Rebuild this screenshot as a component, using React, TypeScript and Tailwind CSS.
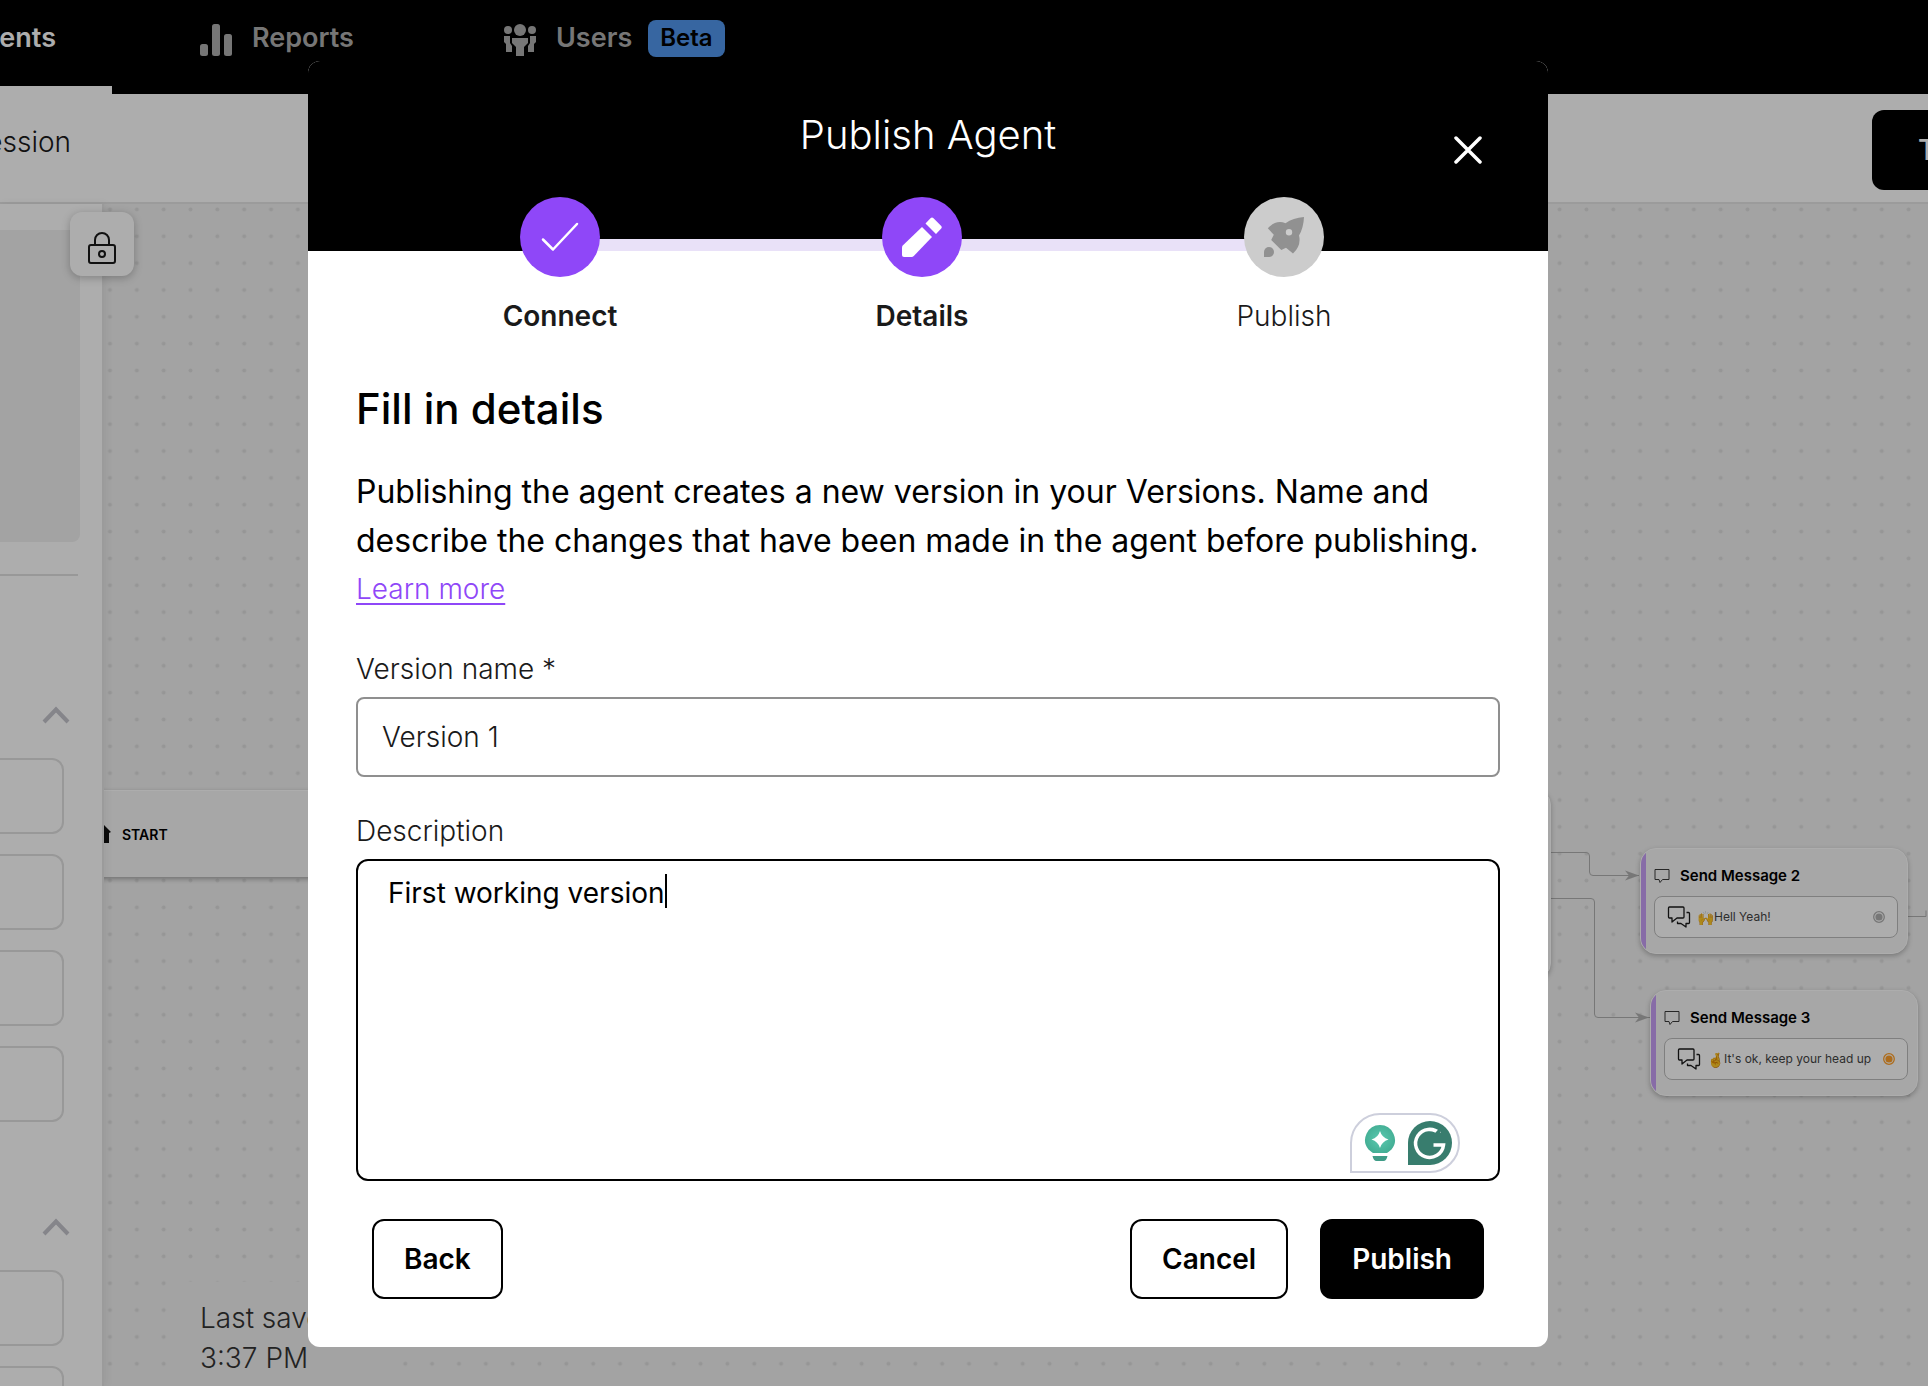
import { useState } from "react";
import type { ReactNode } from "react";

const steps = [
  { label: "Connect", done: true, icon: <CheckIcon /> },
  { label: "Details", done: true, icon: <PencilIcon /> },
  { label: "Publish", done: false, icon: <RocketIcon /> },
];

function BarsIcon() {
  return (
    <svg width="32" height="32" viewBox="0 0 32 32" fill="currentColor">
      <rect x="0" y="20" width="8" height="12" rx="2.5" />
      <rect x="12" y="0" width="8" height="32" rx="2.5" />
      <rect x="24" y="10" width="8" height="22" rx="2.5" />
    </svg>
  );
}

function PeopleIcon() {
  return (
    <svg width="32" height="32" viewBox="0 0 32 32" fill="currentColor">
      <circle cx="4" cy="6" r="4" />
      <circle cx="28" cy="6" r="4" />
      <circle cx="16" cy="6" r="6" />
      <path d="M8 14h16v5l-4 4v9h-8v-9l-4-4z" />
      <path d="M0 12h6v7l2 3v6H2v-8l-2-2z" />
      <path d="M32 12h-6v7l-2 3v6h6v-8l2-2z" />
    </svg>
  );
}

function LockIcon() {
  return (
    <svg width="30" height="34" viewBox="0 0 30 34" fill="none" stroke="#1a1a1a" strokeWidth="2">
      <rect x="2" y="14" width="26" height="18" rx="2" />
      <path d="M8 14V9a7 7 0 0 1 14 0v5" />
      <circle cx="15" cy="23" r="3" />
    </svg>
  );
}

function ChevronUp() {
  return (
    <svg width="28" height="18" viewBox="0 0 28 18" fill="none" stroke="#c4c4cc" strokeWidth="4">
      <path d="M2 16L14 3.500L26 16" />
    </svg>
  );
}

function CheckIcon() {
  return (
    <svg width="40" height="40" viewBox="0 0 40 40" fill="none" stroke="white" strokeWidth="2.500" strokeLinecap="round" strokeLinejoin="round">
      <path d="M3 22.500L13 32.500L37 7" />
    </svg>
  );
}

function PencilIcon() {
  return (
    <svg width="40" height="40" viewBox="0 0 40 40" fill="white">
      <path d="M20 10L30 20L11.800 39Q10.800 40 9.500 40H2Q0 40 0 38V30.500Q0 29.300 1 28.300Z" />
      <path d="M23.500 6.500L28.500 1.200Q30 -0.300 31.500 1.200L39 8.700Q40.500 10.200 39 11.700L34 17Z" />
    </svg>
  );
}

function RocketIcon() {
  return (
    <svg width="40" height="40" viewBox="0 0 40 40" fill="#919191">
      <path fillRule="evenodd" d="M40 0Q29 1 21.500 6.200Q12 2.500 3.800 11.300L9.800 17.800L7.200 23L17.300 33L22 30.800L29 36.500Q37.500 28.500 35 18.500Q39.500 11 40 0ZM25 12a3.200 3.200 0 1 0 0.010 6.400a3.200 3.200 0 1 0 0 -6.400Z" />
      <path d="M0 40V35A5 5 0 1 1 5 40Z" />
    </svg>
  );
}

function BubbleIcon() {
  return (
    <svg className="w-4 h-4" viewBox="0 0 16 16" fill="none" stroke="#3a3a3a" strokeWidth="1">
      <path d="M1 1.500h14v10H8.500L6 14.500L5 11.500H1z" />
    </svg>
  );
}

function BubblesIcon() {
  return (
    <svg className="w-6 h-6 shrink-0" viewBox="0 0 24 24" fill="none" stroke="#1a1a1a" strokeWidth="1.300" strokeLinejoin="round">
      <path d="M2.500 2h13.500q1 0 1 1v9q0 1 -1 1h-6l-5 4v-4h-2.500q-1 0 -1 -1v-9q0 -1 1 -1z" />
      <path d="M19.500 7.500h2q1 0 1 1v9q0 1 -1 1h-2.500v3.500l-5 -3.500h-3.500v-2" />
    </svg>
  );
}

function WritingHelper() {
  return (
    <div className="absolute right-10 bottom-2 flex h-[60px] w-[110px] items-center justify-between rounded-full rounded-bl-none border-2 border-[#cdcfdc] bg-white pl-3 pr-[6px]">
      <svg width="32" height="38" viewBox="0 0 32 38">
        <defs>
          <radialGradient id="bulb" cx="50%" cy="50%" r="55%">
            <stop offset="0" stopColor="#5cc9b0" />
            <stop offset="1" stopColor="#42ad93" />
          </radialGradient>
        </defs>
        <path d="M16 1a15 15 0 0 1 11.500 24.500q-3 2.500 -4.500 3.500h-14q-1.500 -1 -4.500 -3.500A15 15 0 0 1 16 1z" fill="url(#bulb)" />
        <path d="M8.500 32h15q-1 5 -4 5h-7q-3 0 -4 -5z" fill="#3f9c87" />
        <path d="M16 7q1.800 6.500 8.500 8.500q-6.700 2 -8.500 8.500q-1.800 -6.500 -8.500 -8.500q6.700 -2 8.500 -8.500z" fill="white" />
      </svg>
      <svg width="44" height="44" viewBox="0 0 44 44">
        <path d="M22 0a22 22 0 0 1 0 44H0V22A22 22 0 0 1 22 0z" fill="#387d6e" />
        <path d="M31.500 12.500A14 14 0 1 0 35.500 24H25.500" fill="none" stroke="white" strokeWidth="3.500" />
        <path d="M32 6.500v9h-8z" fill="#387d6e" />
      </svg>
    </div>
  );
}

function NavBar() {
  return (
    <nav className="flex h-[94px] shrink-0 bg-black text-[27px] font-semibold text-[#afafaf]">
      <a href="#agents" className="flex w-[112px] shrink-0 flex-col justify-between overflow-hidden text-white">
        <span className="flex h-[76px] items-center justify-end pr-14">Agents</span>
        <span className="h-2 bg-white" />
      </a>
      <a href="#reports" className="ml-[88px] flex h-[76px] w-[304px] shrink-0 items-center gap-5">
        <span className="pt-1"><BarsIcon /></span>
        Reports
      </a>
      <a href="#users" className="flex h-[76px] items-center gap-5">
        <span className="pt-1"><PeopleIcon /></span>
        Users
        <span className="-ml-1 flex h-[37px] items-center rounded-lg bg-[#5197ee] px-3 text-[24px] text-black">Beta</span>
      </a>
    </nav>
  );
}

function Toolbar() {
  return (
    <div className="flex h-[110px] shrink-0 items-start justify-between border-b-2 border-[#e5e5e5] bg-white">
      <div className="flex w-[71px] justify-end overflow-hidden pt-7 text-[28px] leading-10 font-light text-[#1a1a1a]">Session</div>
      <button className="mt-4 -mr-20 h-20 w-[136px] shrink-0 rounded-xl bg-black pl-[46px] text-left text-[28px] font-medium text-white">
        Test
      </button>
    </div>
  );
}

function BlockGroup({ count }: { count: number }) {
  return (
    <section>
      <div className="flex justify-end pr-8">
        <button aria-label="Collapse"><ChevronUp /></button>
      </div>
      <div className="mt-[34px] space-y-5 pr-[38px]">
        {Array.from({ length: count }, (_, i) => (
          <div key={i} className="h-[76px] rounded-r-xl border-2 border-l-0 border-[#e0e0e0]" />
        ))}
      </div>
    </section>
  );
}

function Sidebar() {
  return (
    <aside className="relative z-10 w-[104px] shrink-0 border-r-2 border-[#e5e5e5] bg-white shadow-[2px_0_8px_rgba(0,0,0,0.06)]">
      <div className="h-full overflow-hidden">
        <div className="mt-[26px] mr-[22px] h-[312px] rounded-br-lg bg-[#f0f0f0]" />
        <div className="mt-8 mr-6 h-[2px] bg-[#e0e0e0]" />
        <div className="mt-[130px] space-y-[96px]">
          <BlockGroup count={4} />
          <BlockGroup count={2} />
        </div>
      </div>
      <button aria-label="Lock" className="absolute top-2 left-[70px] flex h-16 w-16 items-center justify-center rounded-xl bg-white pt-2 shadow-[0_2px_8px_rgba(0,0,0,0.25)]">
        <LockIcon />
      </button>
    </aside>
  );
}

function MessageNode({ title, dot, emoji, className, children }: { title: string; dot: string; emoji: string; className: string; children: ReactNode }) {
  return (
    <div className={`absolute h-[106px] w-[268px] overflow-hidden rounded-2xl border border-white bg-[#f6f6f6] shadow-[0_2px_5px_rgba(0,0,0,0.25)] ${className}`}>
      <div className="flex h-full">
        <div className="w-[5px] shrink-0 bg-[#c8a0f7]" />
        <div className="flex-1 pt-[15px] pr-[9px] pl-2">
          <div className="flex h-6 items-center gap-[10px] text-[15px] font-semibold text-black">
            <BubbleIcon />
            {title}
          </div>
          <div className="mt-2 flex h-[42px] items-center rounded-lg border border-[#bcbcbc] bg-white px-3 text-[12px] text-[#444]">
            <BubblesIcon />
            <span className="ml-[6px] flex flex-1 items-center whitespace-nowrap">
              <span className="text-[14px]">{emoji}</span>
              {children}
            </span>
            <svg width="12" height="12" viewBox="0 0 12 12" stroke={dot} fill="none">
              <circle cx="6" cy="6" r="5.300" strokeWidth="1.300" />
              <circle cx="6" cy="6" r="3.600" fill={dot} stroke="none" />
            </svg>
          </div>
        </div>
      </div>
    </div>
  );
}

function Canvas() {
  return (
    <main className="relative flex-1 overflow-hidden bg-[#f0f0f0]">
      <svg className="absolute inset-0 h-full w-full">
        <defs>
          <pattern id="dots" x="-7.400" y="-8" width="26.845" height="26.845" patternUnits="userSpaceOnUse">
            <circle cx="13.400" cy="13.400" r="2" fill="#dedede" />
          </pattern>
        </defs>
        <rect width="100%" height="100%" fill="url(#dots)" />
        <g fill="none" stroke="#b0b0b0">
          <path d="M1440 648.500h42q3.500 0 3.500 3.500v16q0 3.500 3.500 3.500h46" />
          <path d="M1440 694.500h47q3.500 0 3.500 3.500v112q0 3.500 3.500 3.500h52" />
          <path d="M1804 712.500h18v-6" />
        </g>
        <g fill="#b0b0b0">
          <path d="M1535 671.500l-14 -5l4 5l-4 5z" />
          <path d="M1545 813.500l-14 -5l4 5l-4 5z" />
        </g>
      </svg>

      <div className="absolute top-[586px] -left-10 flex h-[87px] w-[600px] items-center rounded-md border-t border-white bg-[#f6f6f6] pl-8 shadow-[0_2px_5px_rgba(0,0,0,0.3)]">
        <svg width="16" height="18" viewBox="0 0 16 18" fill="#111">
          <path d="M8 0L15 7L13 8V18H2V8L0 7z" />
        </svg>
        <span className="ml-[10px] text-[14px] font-semibold text-black">START</span>
      </div>
      <div className="absolute top-[585px] left-[1100px] h-[190px] w-[347px] rounded-2xl border border-white bg-[#f6f6f6] shadow-[0_2px_5px_rgba(0,0,0,0.25)]" />
      <MessageNode title="Send Message 2" dot="#b0b0b0" emoji="🙌" className="top-[644px] left-[1536px]">
        Hell Yeah!
      </MessageNode>
      <MessageNode title="Send Message 3" dot="#ffa02a" emoji="🤞" className="top-[786px] left-[1546px]">
        It's ok, keep your head up
      </MessageNode>
      <div className="absolute bottom-0 left-[78px] h-[104px] w-[200px] bg-[#f0f0f0] pt-4 pl-[18px] text-[28px] leading-10 font-light whitespace-nowrap text-[#333]">
        Last saved
        <br />
        3:37 PM
      </div>
    </main>
  );
}

function Stepper() {
  return (
    <ol className="relative -mt-[54px] flex pr-[83px] pl-[71px]">
      {steps.map((step, i) => (
        <li key={step.label} className="relative flex flex-1 flex-col items-center">
          {i > 0 && <span className="absolute top-[42px] right-1/2 h-3 w-full bg-[#e9e1f8]" />}
          <span className={`z-10 flex h-20 w-20 items-center justify-center rounded-full ${step.done ? "bg-[#8f47f8]" : "bg-[#cccccc]"}`}>
            {step.icon}
          </span>
          <span className={`mt-[19px] text-[28px] leading-10 text-[#1a1a1a] ${step.done ? "font-semibold" : "font-light"}`}>
            {step.label}
          </span>
        </li>
      ))}
    </ol>
  );
}

function PublishDialog() {
  const [name, setName] = useState("Version 1");
  const [description, setDescription] = useState("First working version");

  return (
    <div className="absolute inset-0 z-20 flex items-start justify-center bg-black/32 pt-[61px] pr-[72px]">
      <div role="dialog" aria-labelledby="dialog-title" className="w-full max-w-[1240px] rounded-xl bg-white">
        <header className="relative h-[190px] rounded-t-xl bg-black pt-[50px]">
          <h1 id="dialog-title" className="text-center text-[40px] leading-[48px] font-light text-white">Publish Agent</h1>
          <button aria-label="Close" className="absolute top-[75px] right-[66px]">
            <svg width="28" height="28" viewBox="0 0 28 28" stroke="white" strokeWidth="3.500" strokeLinecap="round">
              <path d="M2 2L26 26M26 2L2 26" />
            </svg>
          </button>
        </header>
        <Stepper />

        <form className="px-12 pt-[49px] pb-12" onSubmit={(e) => e.preventDefault()}>
          <h2 className="text-[42px] leading-[48px] font-medium text-black">Fill in details</h2>
          <p className="mt-[34px] text-[32px] leading-[49px] text-black">
            Publishing the agent creates a new version in your Versions. Name and describe the changes that have been made in the agent before publishing.
          </p>
          <a href="#learn" className="block w-fit text-[28px] leading-[48px] font-light text-[#8f47f8] underline decoration-2 underline-offset-4">
            Learn more
          </a>

          <label htmlFor="version-name" className="mt-8 block text-[28px] leading-[48px] font-light text-[#1a1a1a]">Version name *</label>
          <input
            id="version-name"
            value={name}
            onChange={(e) => setName(e.target.value)}
            className="mt-1 block h-20 w-full rounded-lg border-2 border-[#8f8f8f] px-6 text-[28px] font-light text-[#1a1a1a] outline-none"
          />

          <label htmlFor="description" className="mt-[30px] block text-[28px] leading-[48px] font-light text-[#1a1a1a]">Description</label>
          <div className="relative mt-1">
            <textarea
              id="description"
              value={description}
              onChange={(e) => setDescription(e.target.value)}
              className="block h-[322px] w-full resize-none rounded-xl border-2 border-black px-[30px] py-3 text-[28px] leading-10 text-black caret-transparent outline-none"
            />
            <span className="pointer-events-none absolute top-[15px] left-8 text-[28px] leading-[34px]" aria-hidden="true">
              <span className="block border-r-2 border-black text-transparent">{description}</span>
            </span>
            <WritingHelper />
          </div>

          <div className="mt-[38px] flex gap-8 px-4 text-[28px] font-semibold">
            <button type="button" className="mr-auto h-20 rounded-xl border-2 border-black px-[30px] text-black">Back</button>
            <button type="button" className="h-20 rounded-xl border-2 border-black px-[30px] text-black">Cancel</button>
            <button type="submit" className="h-20 rounded-xl bg-black px-8 text-white">Publish</button>
          </div>
        </form>
      </div>
    </div>
  );
}

export default function App() {
  return (
    <div className="relative flex h-screen flex-col overflow-hidden font-['Inter',sans-serif]">
      <NavBar />
      {/* active tab underline sits flush with the toolbar below */}
      <Toolbar />
      <div className="flex min-h-0 flex-1">
        <Sidebar />
        <Canvas />
      </div>
      <PublishDialog />
    </div>
  );
}
